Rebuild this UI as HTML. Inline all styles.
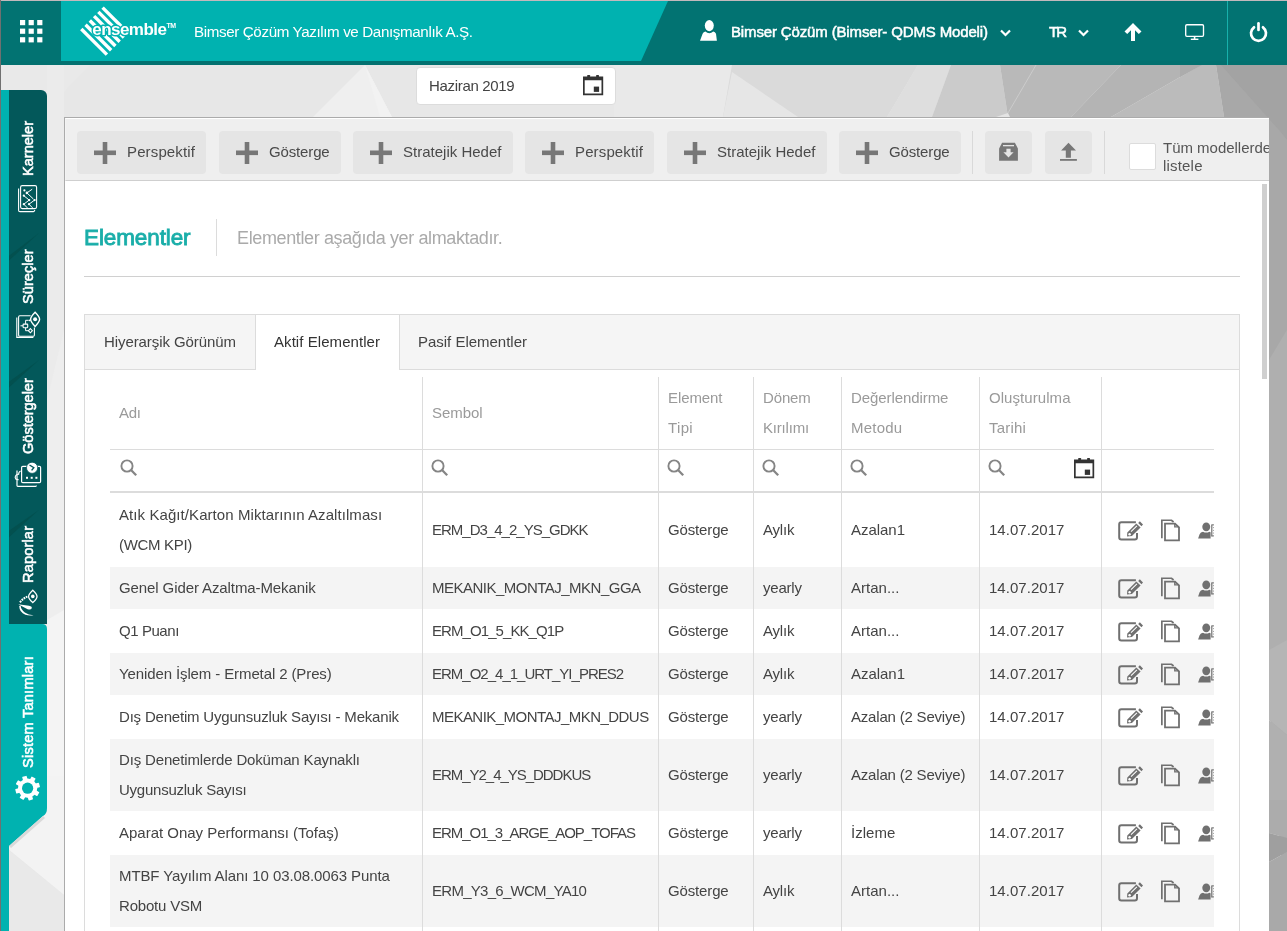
<!DOCTYPE html><html><head><meta charset="utf-8"><title>Elementler</title><style>
*{box-sizing:border-box;margin:0;padding:0}
html,body{width:1287px;height:931px;overflow:hidden}
body{position:relative;font-family:"Liberation Sans",sans-serif;background:#e4e4e4;color:#444}
.a{position:absolute}
.t{position:absolute;white-space:nowrap;line-height:1;will-change:transform}
</style></head><body>
<svg class="a" style="left:0;top:0" width="1287" height="931" viewBox="0 0 1287 931">
<rect width="1287" height="931" fill="#e7e7e7"/>
<polygon points="0,65 90,65 40,117 0,117" fill="#e9e9e9"/>
<polygon points="365,65 313,117 392,117" fill="#efefef"/>
<polygon points="365,65 380,117 392,117" fill="#f2f2f2"/>
<polygon points="614,65 732,65 723,117 614,117" fill="#e9e9e9"/>
<polygon points="732,65 918,65 887,117 723,117" fill="#dadada"/>
<polygon points="732,72 798,117 723,117" fill="#e6e6e6"/>
<polygon points="918,65 951,65 932,117 887,117" fill="#dedede"/>
<polygon points="951,65 1000,65 1008,117 932,117" fill="#cbcbcb"/>
<polygon points="1000,65 1121,65 1071,117 1008,117" fill="#b9b9b9"/>
<polygon points="1121,65 1201,65 1111,117 1071,117" fill="#b4b4b4"/>
<polygon points="1201,65 1216,65 1224,117 1111,117" fill="#bbbbbb"/>
<polygon points="1180,77 1202,65 1180,65" fill="#acacac"/>
<polygon points="1216,65 1287,65 1287,931 1224,117" fill="#a8a8a8"/>
<polygon points="1221,65 1287,65 1287,140 1279,130" fill="#a3a3a3"/>
<line x1="1008" y1="113" x2="1036" y2="65" stroke="#d0d0d0" stroke-width="0.8"/>
<polygon points="996,117 1008,113 1010,117" fill="#e4e4e4"/>
<polygon points="1269,360 1287,330 1287,640 1269,660" fill="#afafaf"/>
<polygon points="1269,650 1287,640 1287,735 1269,720" fill="#b5b5b5"/>
<polygon points="1269,720 1287,735 1287,800 1269,800" fill="#b0b0b0"/>
<polygon points="1269,800 1287,800 1287,838 1269,833" fill="#acacac"/>
<polygon points="1269,833 1287,838 1287,852 1269,862" fill="#9f9f9f"/>
<polygon points="1269,862 1287,852 1287,931 1269,931" fill="#a9a9a9"/>
<polygon points="47,65 64,65 64,931 47,931" fill="#ebebeb"/>
<polygon points="47,400 64,330 64,640 47,660" fill="#eeeeee"/>
<polygon points="47,620 64,610 64,776 47,776" fill="#f4f4f4"/>
<polygon points="9,846 47,812 47,776 64,776 64,895 9,850" fill="#f3f3f3"/>
<polygon points="9,850 64,895 64,931 9,931" fill="#e9e9e9"/>
</svg>
<div class="a" style="left:0;top:0;width:1287px;height:1px;background:#c2b9bc"></div>
<div class="a" style="left:1px;top:1px;width:1286px;height:64px;background:#027372"></div>
<div class="a" style="left:1px;top:61px;width:1286px;height:4px;background:#037170"></div>
<svg class="a" style="left:0;top:0" width="700" height="65"><polygon points="61,1 668,1 641,61 61,61" fill="#00b2b0"/></svg>
<div class="a" style="left:1227px;top:1px;width:1px;height:64px;background:#17b1ac"></div>
<svg class="a" style="left:0;top:0" width="61" height="61"><rect x="20.0" y="20.0" width="5.2" height="5.2" fill="#fff"/><rect x="28.6" y="20.0" width="5.2" height="5.2" fill="#fff"/><rect x="37.2" y="20.0" width="5.2" height="5.2" fill="#fff"/><rect x="20.0" y="28.6" width="5.2" height="5.2" fill="#fff"/><rect x="28.6" y="28.6" width="5.2" height="5.2" fill="#fff"/><rect x="37.2" y="28.6" width="5.2" height="5.2" fill="#fff"/><rect x="20.0" y="37.2" width="5.2" height="5.2" fill="#fff"/><rect x="28.6" y="37.2" width="5.2" height="5.2" fill="#fff"/><rect x="37.2" y="37.2" width="5.2" height="5.2" fill="#fff"/></svg>
<svg class="a" style="left:0;top:0;will-change:transform" width="190" height="61">
<line x1="102.60" y1="7.60" x2="128.20" y2="33.20" stroke="#fff" stroke-width="3.4"/><line x1="98.34" y1="11.88" x2="123.94" y2="37.48" stroke="#fff" stroke-width="3.4"/><line x1="94.08" y1="16.16" x2="119.68" y2="41.76" stroke="#fff" stroke-width="3.4"/><line x1="89.82" y1="20.44" x2="115.42" y2="46.04" stroke="#fff" stroke-width="3.4"/><line x1="85.56" y1="24.72" x2="111.16" y2="50.32" stroke="#fff" stroke-width="3.4"/><line x1="81.30" y1="29.00" x2="106.90" y2="54.60" stroke="#fff" stroke-width="3.4"/>
<text x="92.3" y="34.5" font-family="Liberation Sans" font-weight="700" font-size="17" letter-spacing="-0.55" fill="#fff" stroke="#00b2b0" stroke-width="2.8" paint-order="stroke" stroke-linejoin="round">ensemble</text>
<text x="166.4" y="27.6" font-family="Liberation Sans" font-weight="700" font-size="7" letter-spacing="-0.3" fill="#fff">TM</text>
</svg>
<div class="t" style="left:194.00px;top:24.00px;font-size:15.2px;color:#fff;font-weight:400;line-height:15.2px;letter-spacing:-0.385px;">Bimser Çözüm Yazılım ve Danışmanlık A.Ş.</div>
<svg class="a" style="left:698px;top:19px" width="22" height="24" viewBox="0 0 22 24">
<ellipse cx="11.3" cy="6.6" rx="4.5" ry="5.6" fill="#fff"/>
<path d="M2 21.8 L4.6 14.8 Q5.4 13 7.4 12.6 Q9.2 14.2 11.3 14.2 Q13.4 14.2 15.2 12.6 Q17.2 13 18 14.8 L18.9 21.8 Z" fill="#fff"/></svg>
<div class="t" style="left:731.00px;top:24.00px;font-size:15px;color:#fff;font-weight:400;line-height:15px;letter-spacing:-0.143px;-webkit-text-stroke:0.5px #fff;">Bimser Çözüm (Bimser- QDMS Modeli)</div>
<svg class="a" style="left:1000px;top:28.5px" width="12" height="8"><polyline points="1,1.5 5.5,6 10,1.5" fill="none" stroke="#fff" stroke-width="2.2"/></svg>
<div class="t" style="left:1048.50px;top:24.00px;font-size:15px;color:#fff;font-weight:400;line-height:15px;letter-spacing:-2.000px;-webkit-text-stroke:0.5px #fff;">TR</div>
<svg class="a" style="left:1078px;top:28.5px" width="12" height="8"><polyline points="1,1.5 5.5,6 10,1.5" fill="none" stroke="#fff" stroke-width="2.2"/></svg>
<svg class="a" style="left:1123px;top:22px" width="20" height="20" viewBox="0 0 20 20">
<path d="M10 1 L18.5 9.5 L15.8 12 L12 8.3 L12 19 L8 19 L8 8.3 L4.2 12 L1.5 9.5 Z" fill="#fff"/></svg>
<svg class="a" style="left:1184px;top:23px" width="22" height="18" viewBox="0 0 22 18">
<rect x="1.7" y="1.7" width="17.8" height="11.6" rx="1.2" fill="none" stroke="#fff" stroke-width="1.35"/>
<rect x="9.8" y="13" width="1.6" height="3" fill="#fff"/><rect x="6.8" y="15.6" width="7.6" height="1.4" fill="#fff"/></svg>
<svg class="a" style="left:1247px;top:20.5px" width="23" height="23" viewBox="0 0 23 23">
<path d="M7 6.3 A7.5 7.5 0 1 0 16 6.3" fill="none" stroke="#fff" stroke-width="2.7" stroke-linecap="round"/>
<line x1="11.5" y1="2.3" x2="11.5" y2="9" stroke="#fff" stroke-width="2.7" stroke-linecap="round"/></svg>
<div class="a" style="left:0;top:0;width:1px;height:931px;background:#707070"></div>
<div class="a" style="left:1px;top:90px;width:8px;height:841px;background:#00b2b0"></div>
<div class="a" style="left:9px;top:90px;width:38px;height:534px;background:#03585a;border-top-right-radius:6px"></div>
<svg class="a" style="left:9px;top:90px" width="38" height="534">
<polygon points="29.8,143.3 0,165.8 0,170.6" fill="#03504f"/>
<polygon points="29.8,270.2 0,291.7 0,297.6" fill="#03504f"/>
<polygon points="29.8,420.1 0,440.8 0,447.3" fill="#03504f"/>
</svg>
<svg class="a" style="left:9px;top:624px" width="40" height="230">
<path d="M0 0 L33 0 Q38 0 38 5 L38 184 Q38 190 34 192 L0 222 Z" fill="#00b2b0"/>
<path d="M0 222 L34 192 L36 194 L2 224 Z" fill="#d9d9d9"/>
</svg>
<div class="a" style="left:32.8px;top:149.3px;width:0;height:0;transform:rotate(-90deg)"><div class="a" style="left:-27.50px;top:0;width:400px;height:20px"><div class="t" style="left:0.00px;top:-12.00px;font-size:14.6px;color:#fff;font-weight:400;line-height:14.6px;letter-spacing:-0.025px;-webkit-text-stroke:0.55px #fff;">Karneler</div></div></div>
<div class="a" style="left:32.8px;top:277.0px;width:0;height:0;transform:rotate(-90deg)"><div class="a" style="left:-27.25px;top:0;width:400px;height:20px"><div class="t" style="left:0.00px;top:-12.00px;font-size:14.6px;color:#fff;font-weight:400;line-height:14.6px;letter-spacing:0.022px;-webkit-text-stroke:0.55px #fff;">Süreçler</div></div></div>
<div class="a" style="left:32.8px;top:416.1px;width:0;height:0;transform:rotate(-90deg)"><div class="a" style="left:-37.90px;top:0;width:400px;height:20px"><div class="t" style="left:0.00px;top:-12.00px;font-size:14.6px;color:#fff;font-weight:400;line-height:14.6px;letter-spacing:-0.045px;-webkit-text-stroke:0.55px #fff;">Göstergeler</div></div></div>
<div class="a" style="left:32.8px;top:555.2px;width:0;height:0;transform:rotate(-90deg)"><div class="a" style="left:-28.50px;top:0;width:400px;height:20px"><div class="t" style="left:0.00px;top:-12.00px;font-size:14.6px;color:#fff;font-weight:400;line-height:14.6px;letter-spacing:0.147px;-webkit-text-stroke:0.55px #fff;">Raporlar</div></div></div>
<div class="a" style="left:32.8px;top:711.6px;width:0;height:0;transform:rotate(-90deg)"><div class="a" style="left:-55.85px;top:0;width:400px;height:20px"><div class="t" style="left:0.00px;top:-12.00px;font-size:14.6px;color:#fff;font-weight:400;line-height:14.6px;letter-spacing:0.220px;-webkit-text-stroke:0.55px #fff;">Sistem Tanımları</div></div></div>
<svg class="a" style="left:0;top:0" width="47" height="931" viewBox="0 0 47 931">
<g fill="none" stroke="#fff" stroke-width="1.1">
<path d="M18.6 188.5 L18.6 210.2 Q18.6 211.6 20 211.6 L33.4 211.6 Q34.6 211.4 34.8 210"/>
<rect x="20.6" y="185.6" width="16" height="23" rx="1.6" fill="#03585a"/>
<path d="M26.9 192.9 L32.2 189.2 M26.9 192.9 L33.4 199 M23.8 195.7 L29.2 200.1 L23.8 204.2 L27.4 207.9 M34.6 200.1 L29 204.2 L32.6 207.9" stroke-width="1"/>
</g>
<g fill="#fff"><circle cx="24.4" cy="190.4" r="1.1"/><circle cx="26.9" cy="192.9" r="1.3"/><circle cx="23.8" cy="195.7" r="1.1"/><circle cx="29.2" cy="200.1" r="1.1"/><circle cx="34.6" cy="200.1" r="1.1"/><circle cx="23.8" cy="204.2" r="1.1"/><circle cx="29" cy="204.2" r="1.1"/></g>

<g fill="none" stroke="#fff" stroke-width="1.1">
<path d="M16.8 317.5 L16.8 337.4 L33.4 337.4"/>
<path d="M30.6 315.8 L19.8 315.8 Q18.6 315.8 18.6 317 L18.6 335.2 Q18.6 336.2 19.8 336.2 L33.4 336.2 Q34.4 336.2 34.4 335 L34.4 327.6" fill="#03585a"/>
<path d="M20.5 325.8 L23 325.8 M25.6 323.9 L25.6 320.3 L28.6 320.3 M25.6 327.7 L25.6 330.7 L28.3 330.7" stroke-width="1"/>
<rect x="23.1" y="324.1" width="4.6" height="3.6" rx="0.6"/>
<path d="M30.4 328.6 L32.4 330.7 L30.4 332.8 L28.4 330.7 Z"/>
<path d="M35.1 312.2 Q39.6 316.8 39.6 319.3 Q39.6 321.8 35.1 326.4 Q30.6 321.8 30.6 319.3 Q30.6 316.8 35.1 312.2 Z" fill="#03585a" stroke-width="1.4"/>
</g>
<circle cx="35.1" cy="319.3" r="2" fill="#fff"/>
<circle cx="29.6" cy="320.3" r="0.9" fill="#fff"/>

<g fill="none" stroke="#fff" stroke-width="1.2">
<path d="M17 470.5 L17 485.6 Q17 486.4 17.8 486.4 L35.6 486.4 Q36.4 486.4 36.4 485.6"/>
<rect x="21.6" y="466.4" width="19" height="16.2" rx="1.2" fill="#03585a"/>
<path d="M19.2 474 Q15.2 474.4 15.2 477.6 Q15.6 480 18.6 479.6 M20.6 471 Q18.4 472 18.6 475" stroke-width="1.1"/>
</g>
<circle cx="32.1" cy="467.8" r="5.6" fill="#fff" stroke="#03585a" stroke-width="0.8"/>
<path d="M29.5 465 L33.8 467.6 L31.6 470.4" fill="none" stroke="#03585a" stroke-width="1.4"/>
<g fill="#fff"><rect x="26" y="476.8" width="2" height="2"/><rect x="30.7" y="476.8" width="2" height="2"/><rect x="35.4" y="476.8" width="2" height="2"/></g>

<path d="M32.8 590.2 Q37 594 37 596.4 Q37 598.8 32.8 602.6 Q28.6 598.8 28.6 596.4 Q28.6 594 32.8 590.2 Z" fill="none" stroke="#fff" stroke-width="1.3"/>
<circle cx="32.8" cy="596.4" r="1.8" fill="#fff"/>
<path d="M20 602.3 Q23 598.3 27.4 596.6" fill="none" stroke="#fff" stroke-width="2" stroke-dasharray="1.8 0.8"/>
<path d="M18.2 604.2 L29 605.8 Q32.6 606.6 31.6 608.6 Q30.6 610.2 27.6 609.2 Z" fill="#fff"/>
<path d="M19.2 606 Q19.4 612.4 25.4 614.8 Q29.6 616.2 33.6 615.2 Q28.4 615.2 24.8 612.6 Q21 609.8 20.6 605.6 Z" fill="#fff"/>

<g fill="#fff" transform="translate(27.6,788.2)">
<circle r="9.6"/><rect x="-2.3" y="-12.3" width="4.6" height="5" rx="0.6" transform="rotate(-15.5)"/><rect x="-2.3" y="-12.3" width="4.6" height="5" rx="0.6" transform="rotate(29.5)"/><rect x="-2.3" y="-12.3" width="4.6" height="5" rx="0.6" transform="rotate(74.5)"/><rect x="-2.3" y="-12.3" width="4.6" height="5" rx="0.6" transform="rotate(119.5)"/><rect x="-2.3" y="-12.3" width="4.6" height="5" rx="0.6" transform="rotate(164.5)"/><rect x="-2.3" y="-12.3" width="4.6" height="5" rx="0.6" transform="rotate(209.5)"/><rect x="-2.3" y="-12.3" width="4.6" height="5" rx="0.6" transform="rotate(254.5)"/><rect x="-2.3" y="-12.3" width="4.6" height="5" rx="0.6" transform="rotate(299.5)"/>
<circle r="5.6" fill="#00b2b0"/>
</g>
</svg>
<div class="a" style="left:416px;top:67px;width:200px;height:37.5px;background:#fff;border-radius:4px;border:1px solid #dcdcdc"></div>
<div class="t" style="left:428.60px;top:78.00px;font-size:15px;color:#444;font-weight:400;line-height:15px;letter-spacing:-0.321px;">Haziran 2019</div>
<svg class="a" style="left:582.3px;top:73.5px" width="23" height="23" viewBox="0 0 23 23">
<path d="M1 2.6 L21.2 2.6 L21.2 21.15 L1 21.15 Z M2.7 6.2 L2.7 19.5 L19.5 19.5 L19.5 6.2 Z" fill="#333" fill-rule="evenodd"/>
<rect x="5.2" y="1" width="2.9" height="2" rx="0.6" fill="#333"/><rect x="14.1" y="1" width="2.9" height="2" rx="0.6" fill="#333"/>
<rect x="11.8" y="12.6" width="5.3" height="5.3" fill="#333"/></svg>
<div class="a" style="left:64px;top:117px;width:1205px;height:814px;background:#fff;border:1px solid #ababab;border-bottom:none;border-right:none"></div>
<div class="a" style="left:65px;top:118px;width:1204px;height:63px;background:#efefef;border-bottom:1px solid #cfcfcf;border-top:1px solid #fff;border-left:1px solid #f3f3f3"></div>
<div class="a" style="left:77px;top:131px;width:129px;height:43px;background:#e5e5e5;border-radius:4px"></div>
<svg class="a" style="left:93.5px;top:141.5px" width="22" height="22"><rect x="0" y="8.5" width="22" height="4.6" fill="#777"/><rect x="8.7" y="0" width="4.6" height="22" fill="#777"/></svg>
<div class="t" style="left:126.80px;top:144.00px;font-size:15px;color:#4a4a4a;font-weight:400;line-height:15px;letter-spacing:0.134px;">Perspektif</div>
<div class="a" style="left:219px;top:131px;width:122px;height:43px;background:#e5e5e5;border-radius:4px"></div>
<svg class="a" style="left:235.5px;top:141.5px" width="22" height="22"><rect x="0" y="8.5" width="22" height="4.6" fill="#777"/><rect x="8.7" y="0" width="4.6" height="22" fill="#777"/></svg>
<div class="t" style="left:268.80px;top:144.00px;font-size:15px;color:#4a4a4a;font-weight:400;line-height:15px;letter-spacing:-0.143px;">Gösterge</div>
<div class="a" style="left:353px;top:131px;width:160px;height:43px;background:#e5e5e5;border-radius:4px"></div>
<svg class="a" style="left:369.5px;top:141.5px" width="22" height="22"><rect x="0" y="8.5" width="22" height="4.6" fill="#777"/><rect x="8.7" y="0" width="4.6" height="22" fill="#777"/></svg>
<div class="t" style="left:402.80px;top:144.00px;font-size:15px;color:#4a4a4a;font-weight:400;line-height:15px;letter-spacing:0.006px;">Stratejik Hedef</div>
<div class="a" style="left:525px;top:131px;width:129px;height:43px;background:#e5e5e5;border-radius:4px"></div>
<svg class="a" style="left:541.5px;top:141.5px" width="22" height="22"><rect x="0" y="8.5" width="22" height="4.6" fill="#777"/><rect x="8.7" y="0" width="4.6" height="22" fill="#777"/></svg>
<div class="t" style="left:574.80px;top:144.00px;font-size:15px;color:#4a4a4a;font-weight:400;line-height:15px;letter-spacing:0.134px;">Perspektif</div>
<div class="a" style="left:667px;top:131px;width:160px;height:43px;background:#e5e5e5;border-radius:4px"></div>
<svg class="a" style="left:683.5px;top:141.5px" width="22" height="22"><rect x="0" y="8.5" width="22" height="4.6" fill="#777"/><rect x="8.7" y="0" width="4.6" height="22" fill="#777"/></svg>
<div class="t" style="left:716.80px;top:144.00px;font-size:15px;color:#4a4a4a;font-weight:400;line-height:15px;letter-spacing:0.006px;">Stratejik Hedef</div>
<div class="a" style="left:839px;top:131px;width:122px;height:43px;background:#e5e5e5;border-radius:4px"></div>
<svg class="a" style="left:855.5px;top:141.5px" width="22" height="22"><rect x="0" y="8.5" width="22" height="4.6" fill="#777"/><rect x="8.7" y="0" width="4.6" height="22" fill="#777"/></svg>
<div class="t" style="left:888.80px;top:144.00px;font-size:15px;color:#4a4a4a;font-weight:400;line-height:15px;letter-spacing:-0.143px;">Gösterge</div>
<div class="a" style="left:972px;top:131px;width:1px;height:43px;background:#d9d9d9"></div>
<div class="a" style="left:1104px;top:131px;width:1px;height:43px;background:#d9d9d9"></div>
<div class="a" style="left:985px;top:131px;width:47px;height:43px;background:#e5e5e5;border-radius:4px"></div>
<div class="a" style="left:1045px;top:131px;width:47px;height:43px;background:#e5e5e5;border-radius:4px"></div>
<svg class="a" style="left:999px;top:142px" width="20" height="20" viewBox="0 0 20 20">
<path d="M3.1 0.8 L15.9 0.8 L18.9 6.4 L18.9 18.8 L0.1 18.8 L0.1 6.4 Z" fill="#777"/>
<rect x="4" y="3" width="11" height="1.3" fill="#e5e5e5"/>
<path d="M7.4 6.8 L11.6 6.8 L11.6 10.2 L14.6 10.2 L9.5 15.4 L4.4 10.2 L7.4 10.2 Z" fill="#e5e5e5"/></svg>
<svg class="a" style="left:1059px;top:142px" width="20" height="20" viewBox="0 0 20 20">
<path d="M9.5 0.8 L17 8.5 L11.9 8.5 L11.9 15.8 L6.8 15.8 L6.8 8.5 L2.1 8.5 Z" fill="#777"/>
<rect x="1" y="17" width="16.9" height="1.8" fill="#777"/></svg>
<div class="a" style="left:1129px;top:143px;width:27px;height:27px;background:#fff;border:1px solid #dcdcdc;border-radius:2px"></div>
<div class="a" style="left:0;top:0;width:1269px;height:931px;overflow:hidden">
<div class="t" style="left:1163.20px;top:140.00px;font-size:15px;color:#555;font-weight:400;line-height:15px;letter-spacing:-0.019px;">Tüm modellerde</div>
<div class="t" style="left:1163.20px;top:158.00px;font-size:15px;color:#555;font-weight:400;line-height:15px;letter-spacing:0.190px;">listele</div>
</div>
<div class="a" style="left:1262px;top:184px;width:5px;height:195px;background:#cfcfcf"></div>
<div class="t" style="left:83.60px;top:227.00px;font-size:22.5px;color:#1aaea9;font-weight:400;line-height:22.5px;letter-spacing:-0.105px;-webkit-text-stroke:0.85px #1aaea9;">Elementler</div>
<div class="a" style="left:216px;top:219px;width:1px;height:37px;background:#dcdcdc"></div>
<div class="t" style="left:237.20px;top:229.00px;font-size:18px;color:#aaaaaa;font-weight:400;line-height:18px;letter-spacing:-0.377px;">Elementler aşağıda yer almaktadır.</div>
<div class="a" style="left:84px;top:276px;width:1156px;height:1px;background:#d0d0d0"></div>
<div class="a" style="left:84px;top:314px;width:1156px;height:617px;border:1px solid #dcdcdc;border-bottom:none;background:#fff"></div>
<div class="a" style="left:85px;top:315px;width:1154px;height:55px;background:#f5f5f5;border-bottom:1px solid #dcdcdc"></div>
<div class="a" style="left:255px;top:315px;width:145px;height:55px;background:#fff;border-left:1px solid #dcdcdc;border-right:1px solid #dcdcdc"></div>
<div class="t" style="left:104.40px;top:334.00px;font-size:15px;color:#444;font-weight:400;line-height:15px;letter-spacing:-0.087px;">Hiyerarşik Görünüm</div>
<div class="t" style="left:274.00px;top:334.00px;font-size:15px;color:#333;font-weight:400;line-height:15px;letter-spacing:0.064px;">Aktif Elementler</div>
<div class="t" style="left:418.00px;top:334.00px;font-size:15px;color:#444;font-weight:400;line-height:15px;letter-spacing:-0.016px;">Pasif Elementler</div>
<div class="a" style="left:110px;top:377px;width:1104px;height:554px;overflow:hidden">
<div class="a" style="left:0px;top:190px;width:1104px;height:42px;background:#f4f4f4"></div>
<div class="a" style="left:0px;top:276px;width:1104px;height:42px;background:#f4f4f4"></div>
<div class="a" style="left:0px;top:362px;width:1104px;height:72px;background:#f4f4f4"></div>
<div class="a" style="left:0px;top:478px;width:1104px;height:72px;background:#f4f4f4"></div>
<div class="a" style="left:0px;top:72px;width:1104px;height:1px;background:#dcdcdc"></div>
<div class="a" style="left:0px;top:114px;width:1104px;height:2px;background:#dcdcdc"></div>
<div class="a" style="left:312px;top:0px;width:1px;height:554px;background:#dcdcdc"></div>
<div class="a" style="left:548px;top:0px;width:1px;height:554px;background:#dcdcdc"></div>
<div class="a" style="left:643px;top:0px;width:1px;height:554px;background:#dcdcdc"></div>
<div class="a" style="left:731px;top:0px;width:1px;height:554px;background:#dcdcdc"></div>
<div class="a" style="left:869px;top:0px;width:1px;height:554px;background:#dcdcdc"></div>
<div class="a" style="left:991px;top:0px;width:1px;height:554px;background:#dcdcdc"></div>
<div class="t" style="left:9.00px;top:28.00px;font-size:15px;color:#9a9a9a;font-weight:400;line-height:15px;letter-spacing:-0.273px;">Adı</div>
<div class="t" style="left:321.50px;top:28.00px;font-size:15px;color:#9a9a9a;font-weight:400;line-height:15px;letter-spacing:-0.044px;">Sembol</div>
<div class="t" style="left:557.50px;top:13.00px;font-size:15px;color:#9a9a9a;font-weight:400;line-height:15px;letter-spacing:-0.099px;">Element</div>
<div class="t" style="left:557.50px;top:43.00px;font-size:15px;color:#9a9a9a;font-weight:400;line-height:15px;letter-spacing:0.349px;">Tipi</div>
<div class="t" style="left:652.50px;top:13.00px;font-size:15px;color:#9a9a9a;font-weight:400;line-height:15px;letter-spacing:-0.141px;">Dönem</div>
<div class="t" style="left:652.50px;top:43.00px;font-size:15px;color:#9a9a9a;font-weight:400;line-height:15px;letter-spacing:-0.192px;">Kırılımı</div>
<div class="t" style="left:740.50px;top:13.00px;font-size:15px;color:#9a9a9a;font-weight:400;line-height:15px;letter-spacing:-0.078px;">Değerlendirme</div>
<div class="t" style="left:740.50px;top:43.00px;font-size:15px;color:#9a9a9a;font-weight:400;line-height:15px;letter-spacing:0.209px;">Metodu</div>
<div class="t" style="left:878.50px;top:13.00px;font-size:15px;color:#9a9a9a;font-weight:400;line-height:15px;letter-spacing:0.061px;">Oluşturulma</div>
<div class="t" style="left:878.50px;top:43.00px;font-size:15px;color:#9a9a9a;font-weight:400;line-height:15px;letter-spacing:0.212px;">Tarihi</div>
<svg class="a" style="left:9.35px;top:81.00px" width="20" height="20" viewBox="0 0 20 20"><circle cx="8" cy="8" r="5.6" fill="none" stroke="#858585" stroke-width="1.9"/><line x1="12" y1="12" x2="17.2" y2="17.2" stroke="#858585" stroke-width="2.3"/></svg>
<svg class="a" style="left:319.75px;top:81.00px" width="20" height="20" viewBox="0 0 20 20"><circle cx="8" cy="8" r="5.6" fill="none" stroke="#858585" stroke-width="1.9"/><line x1="12" y1="12" x2="17.2" y2="17.2" stroke="#858585" stroke-width="2.3"/></svg>
<svg class="a" style="left:555.75px;top:81.00px" width="20" height="20" viewBox="0 0 20 20"><circle cx="8" cy="8" r="5.6" fill="none" stroke="#858585" stroke-width="1.9"/><line x1="12" y1="12" x2="17.2" y2="17.2" stroke="#858585" stroke-width="2.3"/></svg>
<svg class="a" style="left:650.75px;top:81.00px" width="20" height="20" viewBox="0 0 20 20"><circle cx="8" cy="8" r="5.6" fill="none" stroke="#858585" stroke-width="1.9"/><line x1="12" y1="12" x2="17.2" y2="17.2" stroke="#858585" stroke-width="2.3"/></svg>
<svg class="a" style="left:738.75px;top:81.00px" width="20" height="20" viewBox="0 0 20 20"><circle cx="8" cy="8" r="5.6" fill="none" stroke="#858585" stroke-width="1.9"/><line x1="12" y1="12" x2="17.2" y2="17.2" stroke="#858585" stroke-width="2.3"/></svg>
<svg class="a" style="left:876.75px;top:81.00px" width="20" height="20" viewBox="0 0 20 20"><circle cx="8" cy="8" r="5.6" fill="none" stroke="#858585" stroke-width="1.9"/><line x1="12" y1="12" x2="17.2" y2="17.2" stroke="#858585" stroke-width="2.3"/></svg>
<svg class="a" style="left:962.5px;top:80px" width="23" height="23" viewBox="0 0 23 23">
<path d="M1 2.6 L21.2 2.6 L21.2 21.15 L1 21.15 Z M2.7 6.2 L2.7 19.5 L19.5 19.5 L19.5 6.2 Z" fill="#333" fill-rule="evenodd"/>
<rect x="5.2" y="1" width="2.9" height="2" rx="0.6" fill="#333"/><rect x="14.1" y="1" width="2.9" height="2" rx="0.6" fill="#333"/>
<rect x="11.8" y="12.6" width="5.3" height="5.3" fill="#333"/></svg>
<div class="t" style="left:9.00px;top:130.00px;font-size:15px;color:#444;font-weight:400;line-height:15px;letter-spacing:0.077px;">Atık Kağıt/Karton Miktarının Azaltılması</div>
<div class="t" style="left:9.00px;top:160.00px;font-size:15px;color:#444;font-weight:400;line-height:15px;letter-spacing:-0.311px;">(WCM KPI)</div>
<div class="t" style="left:321.50px;top:145.00px;font-size:15px;color:#444;font-weight:400;line-height:15px;letter-spacing:-0.994px;">ERM_D3_4_2_YS_GDKK</div>
<div class="t" style="left:557.50px;top:145.00px;font-size:15px;color:#444;font-weight:400;line-height:15px;letter-spacing:-0.143px;">Gösterge</div>
<div class="t" style="left:652.50px;top:145.00px;font-size:15px;color:#444;font-weight:400;line-height:15px;letter-spacing:-0.188px;">Aylık</div>
<div class="t" style="left:740.50px;top:145.00px;font-size:15px;color:#444;font-weight:400;line-height:15px;letter-spacing:-0.036px;">Azalan1</div>
<div class="t" style="left:878.50px;top:145.00px;font-size:15px;color:#444;font-weight:400;line-height:15px;letter-spacing:0.031px;">14.07.2017</div>
<svg class="a" style="left:1002px;top:140.0px" width="102" height="28" viewBox="0 0 102 28">
<path d="M23.9 5.3 L9.4 5.3 Q7.2 5.3 7.2 7.5 L7.2 20.3 Q7.2 22.5 9.4 22.5 L22.8 22.5 Q25 22.5 25 20.3 L25 15.9" fill="none" stroke="#707070" stroke-width="2"/>
<path d="M27.8 4.3 L31 7.4 L29.4 9.2 L26.2 6 Z" fill="#707070"/>
<path d="M24.3 6.5 L28.6 10.5 L19.9 19.1 L15 19.6 L15.3 15.5 Z" fill="#707070"/>
<path d="M19 14.6 L24.9 8.8" stroke="#fff" stroke-width="1.1"/>
<circle cx="17.6" cy="17.2" r="1.2" fill="#fff"/>
<path d="M49.85 21.3 L49.85 3.25 L59.5 3.25 L61.6 5" fill="none" stroke="#707070" stroke-width="1.7"/>
<path d="M53 23.4 L53 6.6 L63 6.6 L67 10.4 L67 23.4 Z" fill="#fff" fill-opacity="0" stroke="#707070" stroke-width="1.8"/>
<path d="M62.8 6.6 L62.8 9.9 L67 9.9" fill="none" stroke="#707070" stroke-width="1.4"/>
<ellipse cx="94.25" cy="9.85" rx="3.95" ry="4.45" fill="#707070"/>
<path d="M86.1 21.6 L87.6 17.2 Q88.6 15 91 14.7 Q92.6 15.6 94.2 15.6 Q95.8 15.6 97.4 14.7 L98.6 15.2 L98.6 21.6 Z" fill="#707070"/>
<path d="M99.8 7.4 L99.8 19.4" stroke="#707070" stroke-width="1.2"/>
<path d="M99.8 7.9 L102 7.9 M99.8 18.9 L102 18.9" stroke="#707070" stroke-width="1"/>
<g fill="#8a8a8a"><rect x="101.1" y="10.2" width="0.9" height="0.9"/><rect x="101.1" y="12.9" width="0.9" height="0.9"/><rect x="101.1" y="15.6" width="0.9" height="0.9"/></g>
</svg>
<div class="t" style="left:9.00px;top:203.00px;font-size:15px;color:#444;font-weight:400;line-height:15px;letter-spacing:-0.098px;">Genel Gider Azaltma-Mekanik</div>
<div class="t" style="left:321.50px;top:203.00px;font-size:15px;color:#444;font-weight:400;line-height:15px;letter-spacing:-0.509px;">MEKANIK_MONTAJ_MKN_GGA</div>
<div class="t" style="left:557.50px;top:203.00px;font-size:15px;color:#444;font-weight:400;line-height:15px;letter-spacing:-0.143px;">Gösterge</div>
<div class="t" style="left:652.50px;top:203.00px;font-size:15px;color:#444;font-weight:400;line-height:15px;letter-spacing:-0.212px;">yearly</div>
<div class="t" style="left:740.50px;top:203.00px;font-size:15px;color:#444;font-weight:400;line-height:15px;letter-spacing:0.013px;">Artan...</div>
<div class="t" style="left:878.50px;top:203.00px;font-size:15px;color:#444;font-weight:400;line-height:15px;letter-spacing:0.031px;">14.07.2017</div>
<svg class="a" style="left:1002px;top:197.5px" width="102" height="28" viewBox="0 0 102 28">
<path d="M23.9 5.3 L9.4 5.3 Q7.2 5.3 7.2 7.5 L7.2 20.3 Q7.2 22.5 9.4 22.5 L22.8 22.5 Q25 22.5 25 20.3 L25 15.9" fill="none" stroke="#707070" stroke-width="2"/>
<path d="M27.8 4.3 L31 7.4 L29.4 9.2 L26.2 6 Z" fill="#707070"/>
<path d="M24.3 6.5 L28.6 10.5 L19.9 19.1 L15 19.6 L15.3 15.5 Z" fill="#707070"/>
<path d="M19 14.6 L24.9 8.8" stroke="#fff" stroke-width="1.1"/>
<circle cx="17.6" cy="17.2" r="1.2" fill="#fff"/>
<path d="M49.85 21.3 L49.85 3.25 L59.5 3.25 L61.6 5" fill="none" stroke="#707070" stroke-width="1.7"/>
<path d="M53 23.4 L53 6.6 L63 6.6 L67 10.4 L67 23.4 Z" fill="#fff" fill-opacity="0" stroke="#707070" stroke-width="1.8"/>
<path d="M62.8 6.6 L62.8 9.9 L67 9.9" fill="none" stroke="#707070" stroke-width="1.4"/>
<ellipse cx="94.25" cy="9.85" rx="3.95" ry="4.45" fill="#707070"/>
<path d="M86.1 21.6 L87.6 17.2 Q88.6 15 91 14.7 Q92.6 15.6 94.2 15.6 Q95.8 15.6 97.4 14.7 L98.6 15.2 L98.6 21.6 Z" fill="#707070"/>
<path d="M99.8 7.4 L99.8 19.4" stroke="#707070" stroke-width="1.2"/>
<path d="M99.8 7.9 L102 7.9 M99.8 18.9 L102 18.9" stroke="#707070" stroke-width="1"/>
<g fill="#8a8a8a"><rect x="101.1" y="10.2" width="0.9" height="0.9"/><rect x="101.1" y="12.9" width="0.9" height="0.9"/><rect x="101.1" y="15.6" width="0.9" height="0.9"/></g>
</svg>
<div class="t" style="left:9.00px;top:246.00px;font-size:15px;color:#444;font-weight:400;line-height:15px;letter-spacing:-0.433px;">Q1 Puanı</div>
<div class="t" style="left:321.50px;top:246.00px;font-size:15px;color:#444;font-weight:400;line-height:15px;letter-spacing:-0.923px;">ERM_O1_5_KK_Q1P</div>
<div class="t" style="left:557.50px;top:246.00px;font-size:15px;color:#444;font-weight:400;line-height:15px;letter-spacing:-0.143px;">Gösterge</div>
<div class="t" style="left:652.50px;top:246.00px;font-size:15px;color:#444;font-weight:400;line-height:15px;letter-spacing:-0.188px;">Aylık</div>
<div class="t" style="left:740.50px;top:246.00px;font-size:15px;color:#444;font-weight:400;line-height:15px;letter-spacing:0.013px;">Artan...</div>
<div class="t" style="left:878.50px;top:246.00px;font-size:15px;color:#444;font-weight:400;line-height:15px;letter-spacing:0.031px;">14.07.2017</div>
<svg class="a" style="left:1002px;top:240.5px" width="102" height="28" viewBox="0 0 102 28">
<path d="M23.9 5.3 L9.4 5.3 Q7.2 5.3 7.2 7.5 L7.2 20.3 Q7.2 22.5 9.4 22.5 L22.8 22.5 Q25 22.5 25 20.3 L25 15.9" fill="none" stroke="#707070" stroke-width="2"/>
<path d="M27.8 4.3 L31 7.4 L29.4 9.2 L26.2 6 Z" fill="#707070"/>
<path d="M24.3 6.5 L28.6 10.5 L19.9 19.1 L15 19.6 L15.3 15.5 Z" fill="#707070"/>
<path d="M19 14.6 L24.9 8.8" stroke="#fff" stroke-width="1.1"/>
<circle cx="17.6" cy="17.2" r="1.2" fill="#fff"/>
<path d="M49.85 21.3 L49.85 3.25 L59.5 3.25 L61.6 5" fill="none" stroke="#707070" stroke-width="1.7"/>
<path d="M53 23.4 L53 6.6 L63 6.6 L67 10.4 L67 23.4 Z" fill="#fff" fill-opacity="0" stroke="#707070" stroke-width="1.8"/>
<path d="M62.8 6.6 L62.8 9.9 L67 9.9" fill="none" stroke="#707070" stroke-width="1.4"/>
<ellipse cx="94.25" cy="9.85" rx="3.95" ry="4.45" fill="#707070"/>
<path d="M86.1 21.6 L87.6 17.2 Q88.6 15 91 14.7 Q92.6 15.6 94.2 15.6 Q95.8 15.6 97.4 14.7 L98.6 15.2 L98.6 21.6 Z" fill="#707070"/>
<path d="M99.8 7.4 L99.8 19.4" stroke="#707070" stroke-width="1.2"/>
<path d="M99.8 7.9 L102 7.9 M99.8 18.9 L102 18.9" stroke="#707070" stroke-width="1"/>
<g fill="#8a8a8a"><rect x="101.1" y="10.2" width="0.9" height="0.9"/><rect x="101.1" y="12.9" width="0.9" height="0.9"/><rect x="101.1" y="15.6" width="0.9" height="0.9"/></g>
</svg>
<div class="t" style="left:9.00px;top:289.00px;font-size:15px;color:#444;font-weight:400;line-height:15px;letter-spacing:-0.111px;">Yeniden İşlem - Ermetal 2 (Pres)</div>
<div class="t" style="left:321.50px;top:289.00px;font-size:15px;color:#444;font-weight:400;line-height:15px;letter-spacing:-0.996px;">ERM_O2_4_1_URT_YI_PRES2</div>
<div class="t" style="left:557.50px;top:289.00px;font-size:15px;color:#444;font-weight:400;line-height:15px;letter-spacing:-0.143px;">Gösterge</div>
<div class="t" style="left:652.50px;top:289.00px;font-size:15px;color:#444;font-weight:400;line-height:15px;letter-spacing:-0.188px;">Aylık</div>
<div class="t" style="left:740.50px;top:289.00px;font-size:15px;color:#444;font-weight:400;line-height:15px;letter-spacing:-0.036px;">Azalan1</div>
<div class="t" style="left:878.50px;top:289.00px;font-size:15px;color:#444;font-weight:400;line-height:15px;letter-spacing:0.031px;">14.07.2017</div>
<svg class="a" style="left:1002px;top:283.5px" width="102" height="28" viewBox="0 0 102 28">
<path d="M23.9 5.3 L9.4 5.3 Q7.2 5.3 7.2 7.5 L7.2 20.3 Q7.2 22.5 9.4 22.5 L22.8 22.5 Q25 22.5 25 20.3 L25 15.9" fill="none" stroke="#707070" stroke-width="2"/>
<path d="M27.8 4.3 L31 7.4 L29.4 9.2 L26.2 6 Z" fill="#707070"/>
<path d="M24.3 6.5 L28.6 10.5 L19.9 19.1 L15 19.6 L15.3 15.5 Z" fill="#707070"/>
<path d="M19 14.6 L24.9 8.8" stroke="#fff" stroke-width="1.1"/>
<circle cx="17.6" cy="17.2" r="1.2" fill="#fff"/>
<path d="M49.85 21.3 L49.85 3.25 L59.5 3.25 L61.6 5" fill="none" stroke="#707070" stroke-width="1.7"/>
<path d="M53 23.4 L53 6.6 L63 6.6 L67 10.4 L67 23.4 Z" fill="#fff" fill-opacity="0" stroke="#707070" stroke-width="1.8"/>
<path d="M62.8 6.6 L62.8 9.9 L67 9.9" fill="none" stroke="#707070" stroke-width="1.4"/>
<ellipse cx="94.25" cy="9.85" rx="3.95" ry="4.45" fill="#707070"/>
<path d="M86.1 21.6 L87.6 17.2 Q88.6 15 91 14.7 Q92.6 15.6 94.2 15.6 Q95.8 15.6 97.4 14.7 L98.6 15.2 L98.6 21.6 Z" fill="#707070"/>
<path d="M99.8 7.4 L99.8 19.4" stroke="#707070" stroke-width="1.2"/>
<path d="M99.8 7.9 L102 7.9 M99.8 18.9 L102 18.9" stroke="#707070" stroke-width="1"/>
<g fill="#8a8a8a"><rect x="101.1" y="10.2" width="0.9" height="0.9"/><rect x="101.1" y="12.9" width="0.9" height="0.9"/><rect x="101.1" y="15.6" width="0.9" height="0.9"/></g>
</svg>
<div class="t" style="left:9.00px;top:332.00px;font-size:15px;color:#444;font-weight:400;line-height:15px;letter-spacing:-0.194px;">Dış Denetim Uygunsuzluk Sayısı - Mekanik</div>
<div class="t" style="left:321.50px;top:332.00px;font-size:15px;color:#444;font-weight:400;line-height:15px;letter-spacing:-0.534px;">MEKANIK_MONTAJ_MKN_DDUS</div>
<div class="t" style="left:557.50px;top:332.00px;font-size:15px;color:#444;font-weight:400;line-height:15px;letter-spacing:-0.143px;">Gösterge</div>
<div class="t" style="left:652.50px;top:332.00px;font-size:15px;color:#444;font-weight:400;line-height:15px;letter-spacing:-0.212px;">yearly</div>
<div class="t" style="left:740.50px;top:332.00px;font-size:15px;color:#444;font-weight:400;line-height:15px;letter-spacing:-0.195px;">Azalan (2 Seviye)</div>
<div class="t" style="left:878.50px;top:332.00px;font-size:15px;color:#444;font-weight:400;line-height:15px;letter-spacing:0.031px;">14.07.2017</div>
<svg class="a" style="left:1002px;top:326.5px" width="102" height="28" viewBox="0 0 102 28">
<path d="M23.9 5.3 L9.4 5.3 Q7.2 5.3 7.2 7.5 L7.2 20.3 Q7.2 22.5 9.4 22.5 L22.8 22.5 Q25 22.5 25 20.3 L25 15.9" fill="none" stroke="#707070" stroke-width="2"/>
<path d="M27.8 4.3 L31 7.4 L29.4 9.2 L26.2 6 Z" fill="#707070"/>
<path d="M24.3 6.5 L28.6 10.5 L19.9 19.1 L15 19.6 L15.3 15.5 Z" fill="#707070"/>
<path d="M19 14.6 L24.9 8.8" stroke="#fff" stroke-width="1.1"/>
<circle cx="17.6" cy="17.2" r="1.2" fill="#fff"/>
<path d="M49.85 21.3 L49.85 3.25 L59.5 3.25 L61.6 5" fill="none" stroke="#707070" stroke-width="1.7"/>
<path d="M53 23.4 L53 6.6 L63 6.6 L67 10.4 L67 23.4 Z" fill="#fff" fill-opacity="0" stroke="#707070" stroke-width="1.8"/>
<path d="M62.8 6.6 L62.8 9.9 L67 9.9" fill="none" stroke="#707070" stroke-width="1.4"/>
<ellipse cx="94.25" cy="9.85" rx="3.95" ry="4.45" fill="#707070"/>
<path d="M86.1 21.6 L87.6 17.2 Q88.6 15 91 14.7 Q92.6 15.6 94.2 15.6 Q95.8 15.6 97.4 14.7 L98.6 15.2 L98.6 21.6 Z" fill="#707070"/>
<path d="M99.8 7.4 L99.8 19.4" stroke="#707070" stroke-width="1.2"/>
<path d="M99.8 7.9 L102 7.9 M99.8 18.9 L102 18.9" stroke="#707070" stroke-width="1"/>
<g fill="#8a8a8a"><rect x="101.1" y="10.2" width="0.9" height="0.9"/><rect x="101.1" y="12.9" width="0.9" height="0.9"/><rect x="101.1" y="15.6" width="0.9" height="0.9"/></g>
</svg>
<div class="t" style="left:9.00px;top:375.00px;font-size:15px;color:#444;font-weight:400;line-height:15px;letter-spacing:-0.155px;">Dış Denetimlerde Doküman Kaynaklı</div>
<div class="t" style="left:9.00px;top:405.00px;font-size:15px;color:#444;font-weight:400;line-height:15px;letter-spacing:-0.242px;">Uygunsuzluk Sayısı</div>
<div class="t" style="left:321.50px;top:390.00px;font-size:15px;color:#444;font-weight:400;line-height:15px;letter-spacing:-1.033px;">ERM_Y2_4_YS_DDDKUS</div>
<div class="t" style="left:557.50px;top:390.00px;font-size:15px;color:#444;font-weight:400;line-height:15px;letter-spacing:-0.143px;">Gösterge</div>
<div class="t" style="left:652.50px;top:390.00px;font-size:15px;color:#444;font-weight:400;line-height:15px;letter-spacing:-0.212px;">yearly</div>
<div class="t" style="left:740.50px;top:390.00px;font-size:15px;color:#444;font-weight:400;line-height:15px;letter-spacing:-0.195px;">Azalan (2 Seviye)</div>
<div class="t" style="left:878.50px;top:390.00px;font-size:15px;color:#444;font-weight:400;line-height:15px;letter-spacing:0.031px;">14.07.2017</div>
<svg class="a" style="left:1002px;top:384.5px" width="102" height="28" viewBox="0 0 102 28">
<path d="M23.9 5.3 L9.4 5.3 Q7.2 5.3 7.2 7.5 L7.2 20.3 Q7.2 22.5 9.4 22.5 L22.8 22.5 Q25 22.5 25 20.3 L25 15.9" fill="none" stroke="#707070" stroke-width="2"/>
<path d="M27.8 4.3 L31 7.4 L29.4 9.2 L26.2 6 Z" fill="#707070"/>
<path d="M24.3 6.5 L28.6 10.5 L19.9 19.1 L15 19.6 L15.3 15.5 Z" fill="#707070"/>
<path d="M19 14.6 L24.9 8.8" stroke="#fff" stroke-width="1.1"/>
<circle cx="17.6" cy="17.2" r="1.2" fill="#fff"/>
<path d="M49.85 21.3 L49.85 3.25 L59.5 3.25 L61.6 5" fill="none" stroke="#707070" stroke-width="1.7"/>
<path d="M53 23.4 L53 6.6 L63 6.6 L67 10.4 L67 23.4 Z" fill="#fff" fill-opacity="0" stroke="#707070" stroke-width="1.8"/>
<path d="M62.8 6.6 L62.8 9.9 L67 9.9" fill="none" stroke="#707070" stroke-width="1.4"/>
<ellipse cx="94.25" cy="9.85" rx="3.95" ry="4.45" fill="#707070"/>
<path d="M86.1 21.6 L87.6 17.2 Q88.6 15 91 14.7 Q92.6 15.6 94.2 15.6 Q95.8 15.6 97.4 14.7 L98.6 15.2 L98.6 21.6 Z" fill="#707070"/>
<path d="M99.8 7.4 L99.8 19.4" stroke="#707070" stroke-width="1.2"/>
<path d="M99.8 7.9 L102 7.9 M99.8 18.9 L102 18.9" stroke="#707070" stroke-width="1"/>
<g fill="#8a8a8a"><rect x="101.1" y="10.2" width="0.9" height="0.9"/><rect x="101.1" y="12.9" width="0.9" height="0.9"/><rect x="101.1" y="15.6" width="0.9" height="0.9"/></g>
</svg>
<div class="t" style="left:9.00px;top:448.00px;font-size:15px;color:#444;font-weight:400;line-height:15px;letter-spacing:-0.009px;">Aparat Onay Performansı (Tofaş)</div>
<div class="t" style="left:321.50px;top:448.00px;font-size:15px;color:#444;font-weight:400;line-height:15px;letter-spacing:-1.025px;">ERM_O1_3_ARGE_AOP_TOFAS</div>
<div class="t" style="left:557.50px;top:448.00px;font-size:15px;color:#444;font-weight:400;line-height:15px;letter-spacing:-0.143px;">Gösterge</div>
<div class="t" style="left:652.50px;top:448.00px;font-size:15px;color:#444;font-weight:400;line-height:15px;letter-spacing:-0.212px;">yearly</div>
<div class="t" style="left:740.50px;top:448.00px;font-size:15px;color:#444;font-weight:400;line-height:15px;letter-spacing:0.009px;">İzleme</div>
<div class="t" style="left:878.50px;top:448.00px;font-size:15px;color:#444;font-weight:400;line-height:15px;letter-spacing:0.031px;">14.07.2017</div>
<svg class="a" style="left:1002px;top:442.5px" width="102" height="28" viewBox="0 0 102 28">
<path d="M23.9 5.3 L9.4 5.3 Q7.2 5.3 7.2 7.5 L7.2 20.3 Q7.2 22.5 9.4 22.5 L22.8 22.5 Q25 22.5 25 20.3 L25 15.9" fill="none" stroke="#707070" stroke-width="2"/>
<path d="M27.8 4.3 L31 7.4 L29.4 9.2 L26.2 6 Z" fill="#707070"/>
<path d="M24.3 6.5 L28.6 10.5 L19.9 19.1 L15 19.6 L15.3 15.5 Z" fill="#707070"/>
<path d="M19 14.6 L24.9 8.8" stroke="#fff" stroke-width="1.1"/>
<circle cx="17.6" cy="17.2" r="1.2" fill="#fff"/>
<path d="M49.85 21.3 L49.85 3.25 L59.5 3.25 L61.6 5" fill="none" stroke="#707070" stroke-width="1.7"/>
<path d="M53 23.4 L53 6.6 L63 6.6 L67 10.4 L67 23.4 Z" fill="#fff" fill-opacity="0" stroke="#707070" stroke-width="1.8"/>
<path d="M62.8 6.6 L62.8 9.9 L67 9.9" fill="none" stroke="#707070" stroke-width="1.4"/>
<ellipse cx="94.25" cy="9.85" rx="3.95" ry="4.45" fill="#707070"/>
<path d="M86.1 21.6 L87.6 17.2 Q88.6 15 91 14.7 Q92.6 15.6 94.2 15.6 Q95.8 15.6 97.4 14.7 L98.6 15.2 L98.6 21.6 Z" fill="#707070"/>
<path d="M99.8 7.4 L99.8 19.4" stroke="#707070" stroke-width="1.2"/>
<path d="M99.8 7.9 L102 7.9 M99.8 18.9 L102 18.9" stroke="#707070" stroke-width="1"/>
<g fill="#8a8a8a"><rect x="101.1" y="10.2" width="0.9" height="0.9"/><rect x="101.1" y="12.9" width="0.9" height="0.9"/><rect x="101.1" y="15.6" width="0.9" height="0.9"/></g>
</svg>
<div class="t" style="left:9.00px;top:491.00px;font-size:15px;color:#444;font-weight:400;line-height:15px;letter-spacing:-0.103px;">MTBF Yayılım Alanı 10 03.08.0063 Punta</div>
<div class="t" style="left:9.00px;top:521.00px;font-size:15px;color:#444;font-weight:400;line-height:15px;letter-spacing:-0.201px;">Robotu VSM</div>
<div class="t" style="left:321.50px;top:506.00px;font-size:15px;color:#444;font-weight:400;line-height:15px;letter-spacing:-0.721px;">ERM_Y3_6_WCM_YA10</div>
<div class="t" style="left:557.50px;top:506.00px;font-size:15px;color:#444;font-weight:400;line-height:15px;letter-spacing:-0.143px;">Gösterge</div>
<div class="t" style="left:652.50px;top:506.00px;font-size:15px;color:#444;font-weight:400;line-height:15px;letter-spacing:-0.188px;">Aylık</div>
<div class="t" style="left:740.50px;top:506.00px;font-size:15px;color:#444;font-weight:400;line-height:15px;letter-spacing:0.013px;">Artan...</div>
<div class="t" style="left:878.50px;top:506.00px;font-size:15px;color:#444;font-weight:400;line-height:15px;letter-spacing:0.031px;">14.07.2017</div>
<svg class="a" style="left:1002px;top:500.5px" width="102" height="28" viewBox="0 0 102 28">
<path d="M23.9 5.3 L9.4 5.3 Q7.2 5.3 7.2 7.5 L7.2 20.3 Q7.2 22.5 9.4 22.5 L22.8 22.5 Q25 22.5 25 20.3 L25 15.9" fill="none" stroke="#707070" stroke-width="2"/>
<path d="M27.8 4.3 L31 7.4 L29.4 9.2 L26.2 6 Z" fill="#707070"/>
<path d="M24.3 6.5 L28.6 10.5 L19.9 19.1 L15 19.6 L15.3 15.5 Z" fill="#707070"/>
<path d="M19 14.6 L24.9 8.8" stroke="#fff" stroke-width="1.1"/>
<circle cx="17.6" cy="17.2" r="1.2" fill="#fff"/>
<path d="M49.85 21.3 L49.85 3.25 L59.5 3.25 L61.6 5" fill="none" stroke="#707070" stroke-width="1.7"/>
<path d="M53 23.4 L53 6.6 L63 6.6 L67 10.4 L67 23.4 Z" fill="#fff" fill-opacity="0" stroke="#707070" stroke-width="1.8"/>
<path d="M62.8 6.6 L62.8 9.9 L67 9.9" fill="none" stroke="#707070" stroke-width="1.4"/>
<ellipse cx="94.25" cy="9.85" rx="3.95" ry="4.45" fill="#707070"/>
<path d="M86.1 21.6 L87.6 17.2 Q88.6 15 91 14.7 Q92.6 15.6 94.2 15.6 Q95.8 15.6 97.4 14.7 L98.6 15.2 L98.6 21.6 Z" fill="#707070"/>
<path d="M99.8 7.4 L99.8 19.4" stroke="#707070" stroke-width="1.2"/>
<path d="M99.8 7.9 L102 7.9 M99.8 18.9 L102 18.9" stroke="#707070" stroke-width="1"/>
<g fill="#8a8a8a"><rect x="101.1" y="10.2" width="0.9" height="0.9"/><rect x="101.1" y="12.9" width="0.9" height="0.9"/><rect x="101.1" y="15.6" width="0.9" height="0.9"/></g>
</svg>
</div>
</body></html>
